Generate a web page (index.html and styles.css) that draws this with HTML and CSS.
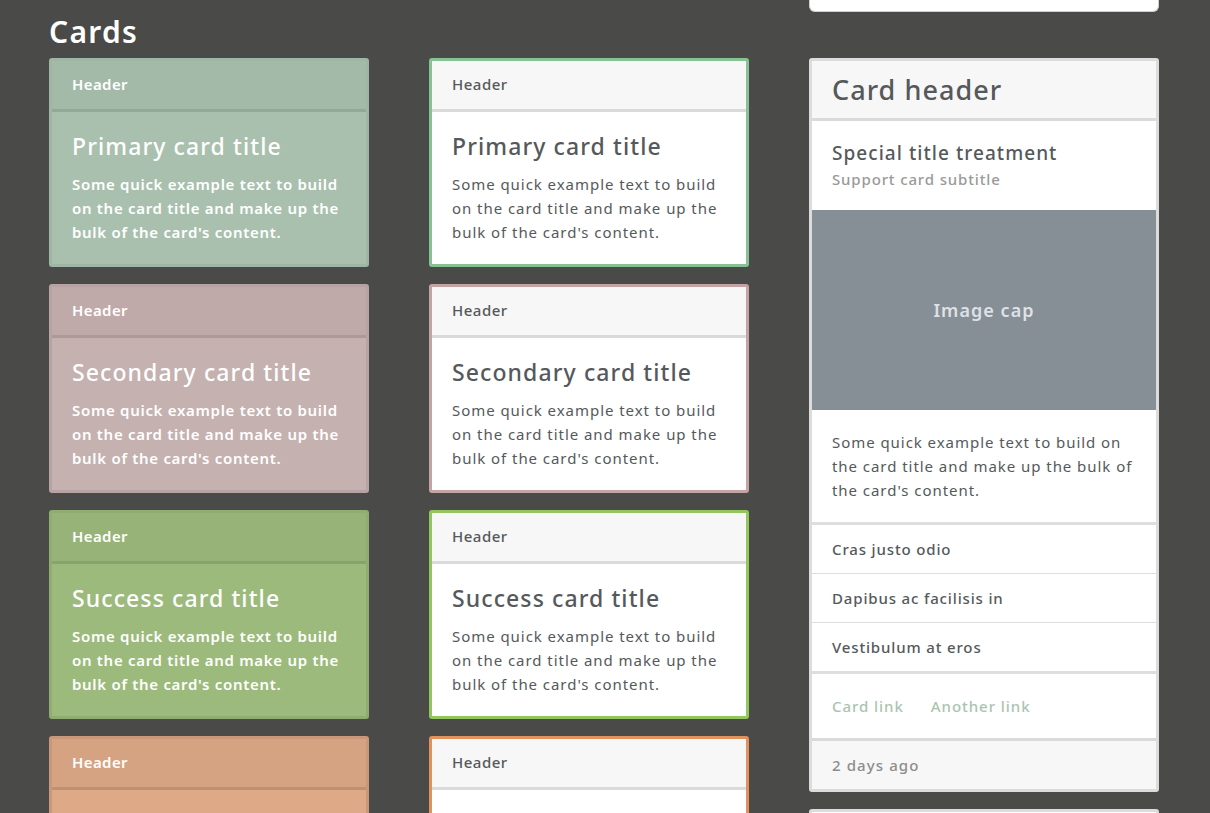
FILE: index.html
```html
<!DOCTYPE html>
<html lang="en">
<head>
<meta charset="utf-8">
<title>Cards</title>
<link rel="stylesheet" href="styles.css">
</head>
<body>
<div class="page">
  <h2 class="section-title">Cards</h2>
  <div class="stub"></div>

  <div class="col">
    <div class="card solid primary">
      <div class="card-header">Header</div>
      <div class="card-body">
        <h4 class="card-title">Primary card title</h4>
        <p class="card-text">Some quick example text to build on the card title and make up the bulk of the card's content.</p>
      </div>
    </div>
    <div class="card solid secondary">
      <div class="card-header">Header</div>
      <div class="card-body">
        <h4 class="card-title">Secondary card title</h4>
        <p class="card-text">Some quick example text to build on the card title and make up the bulk of the card's content.</p>
      </div>
    </div>
    <div class="card solid success">
      <div class="card-header">Header</div>
      <div class="card-body">
        <h4 class="card-title">Success card title</h4>
        <p class="card-text">Some quick example text to build on the card title and make up the bulk of the card's content.</p>
      </div>
    </div>
    <div class="card solid warning">
      <div class="card-header">Header</div>
      <div class="card-body">
        <h4 class="card-title">Warning card title</h4>
        <p class="card-text">Some quick example text to build on the card title and make up the bulk of the card's content.</p>
      </div>
    </div>
  </div>

  <div class="col">
    <div class="card outline primary">
      <div class="card-header">Header</div>
      <div class="card-body">
        <h4 class="card-title">Primary card title</h4>
        <p class="card-text">Some quick example text to build on the card title and make up the bulk of the card's content.</p>
      </div>
    </div>
    <div class="card outline secondary">
      <div class="card-header">Header</div>
      <div class="card-body">
        <h4 class="card-title">Secondary card title</h4>
        <p class="card-text">Some quick example text to build on the card title and make up the bulk of the card's content.</p>
      </div>
    </div>
    <div class="card outline success">
      <div class="card-header">Header</div>
      <div class="card-body">
        <h4 class="card-title">Success card title</h4>
        <p class="card-text">Some quick example text to build on the card title and make up the bulk of the card's content.</p>
      </div>
    </div>
    <div class="card outline warning">
      <div class="card-header">Header</div>
      <div class="card-body">
        <h4 class="card-title">Warning card title</h4>
        <p class="card-text">Some quick example text to build on the card title and make up the bulk of the card's content.</p>
      </div>
    </div>
  </div>

  <div class="col">
    <div class="card plain">
      <h3 class="card-header big">Card header</h3>
      <div class="card-body">
        <h5 class="special-title">Special title treatment</h5>
        <h6 class="card-subtitle">Support card subtitle</h6>
      </div>
      <div class="image-cap">Image cap</div>
      <div class="card-body">
        <p class="card-text">Some quick example text to build on the card title and make up the bulk of the card's content.</p>
      </div>
      <ul class="list-group">
        <li class="list-item">Cras justo odio</li>
        <li class="list-item">Dapibus ac facilisis in</li>
        <li class="list-item">Vestibulum at eros</li>
      </ul>
      <div class="card-body links">
        <a href="#" class="card-link">Card link</a>
        <a href="#" class="card-link">Another link</a>
      </div>
      <div class="card-footer">2 days ago</div>
    </div>
    <div class="card plain next"></div>
  </div>
</div>
</body>
</html>
```

FILE: styles.css
```css
html, body {
  margin: 0;
  padding: 0;
  height: 100%;
  overflow: hidden;
}

body {
  background: #4a4a48;
  font-family: "Noto Sans", "Open Sans", sans-serif;
  font-size: 15px;
  line-height: 24px;
  letter-spacing: 0.95px;
  color: #55595c;
}

.page {
  display: grid;
  grid-template-columns: 320px 320px 350px;
  column-gap: 60px;
  padding-left: 49px;
  align-items: start;
}

.section-title {
  grid-column: 1 / 3;
  grid-row: 1;
  margin: 14px 0 8px;
  font-size: 30px;
  line-height: 36px;
  font-weight: 600;
  color: #ffffff;
  letter-spacing: 1.3px;
}

.stub {
  grid-column: 3;
  grid-row: 1;
  height: 11px;
  background: #ffffff;
  border: 1px solid #cfcfcf;
  border-top: none;
  border-radius: 0 0 6px 6px;
}

.col {
  grid-row: 2;
  display: flex;
  flex-direction: column;
  gap: 17px;
}

.card {
  border: 3px solid #dcdcdc;
  border-radius: 3px;
  background: #ffffff;
  overflow: hidden;
}

.card-header {
  margin: 0;
  padding: 11px 20px 13px;
  font-size: 15px;
  line-height: 24px;
  font-weight: 600;
  letter-spacing: 0.4px;
  background: #f7f7f7;
  border-bottom: 3px solid #dadada;
}

.card-body {
  padding: 20px;
}

.card-title {
  margin: 0 0 12px;
  font-size: 23px;
  line-height: 28px;
  font-weight: 500;
  letter-spacing: 1.1px;
}

.card-text {
  margin: 0;
}

/* Solid colour cards */
.solid {
  color: #ffffff;
}
.solid .card-text {
  font-weight: 600;
  letter-spacing: 0.7px;
}
.solid.primary { background: #a9c0ae; border-color: #9fb6a4; }
.solid.primary .card-header { background: #a3baa8; border-bottom-color: #93a997; }
.solid.secondary { background: #c4b1b0; border-color: #b7a3a3; }
.solid.secondary .card-header { background: #bfaaa9; border-bottom-color: #ae9998; }
.solid.success { background: #9cba7c; border-color: #90ad71; }
.solid.success .card-header { background: #97b378; border-bottom-color: #87a36b; }
.solid.warning { background: #dea987; border-color: #c9977a; }
.solid.warning .card-header { background: #d6a382; border-bottom-color: #c09073; }

/* Outline cards */
.outline .card-header { font-weight: 500; letter-spacing: 0.5px; }
.outline.primary { border-color: #86c293; }
.outline.secondary { border-color: #c3a3a3; }
.outline.success { border-color: #94c65e; }
.outline.warning { border-color: #e0915c; }

/* Plain card (column 3) */
.card-header.big {
  padding: 12px 20px;
  font-size: 27px;
  line-height: 33px;
  font-weight: 500;
  letter-spacing: 1.05px;
}

.special-title {
  margin: 0 0 3px;
  font-size: 19px;
  line-height: 24px;
  font-weight: 500;
  letter-spacing: 1.05px;
}

.card-subtitle {
  margin: 0;
  font-size: 15px;
  line-height: 22px;
  font-weight: 500;
  letter-spacing: 0.85px;
  color: #9a9a9a;
}

.image-cap {
  height: 200px;
  background: #868e96;
  color: #dee2e6;
  font-size: 18px;
  font-weight: 600;
  letter-spacing: 1.05px;
  display: flex;
  align-items: center;
  justify-content: center;
}

.list-group {
  list-style: none;
  margin: 0;
  padding: 0;
  border-top: 3px solid #dedede;
  border-bottom: 3px solid #dedede;
}

.list-item {
  padding: 12px 20px;
  font-weight: 500;
  letter-spacing: 0.85px;
}

.list-item + .list-item {
  border-top: 1px solid #dedede;
}

.links {
  display: flex;
  gap: 27px;
}

.card-link {
  color: #a9c4b1;
  text-decoration: none;
  font-weight: 500;
}

.card-footer {
  padding: 12px 20px;
  background: #f7f7f7;
  border-top: 3px solid #dadada;
  color: #8c8c8c;
  font-weight: 500;
  letter-spacing: 1.1px;
}

.next {
  height: 60px;
}
```
